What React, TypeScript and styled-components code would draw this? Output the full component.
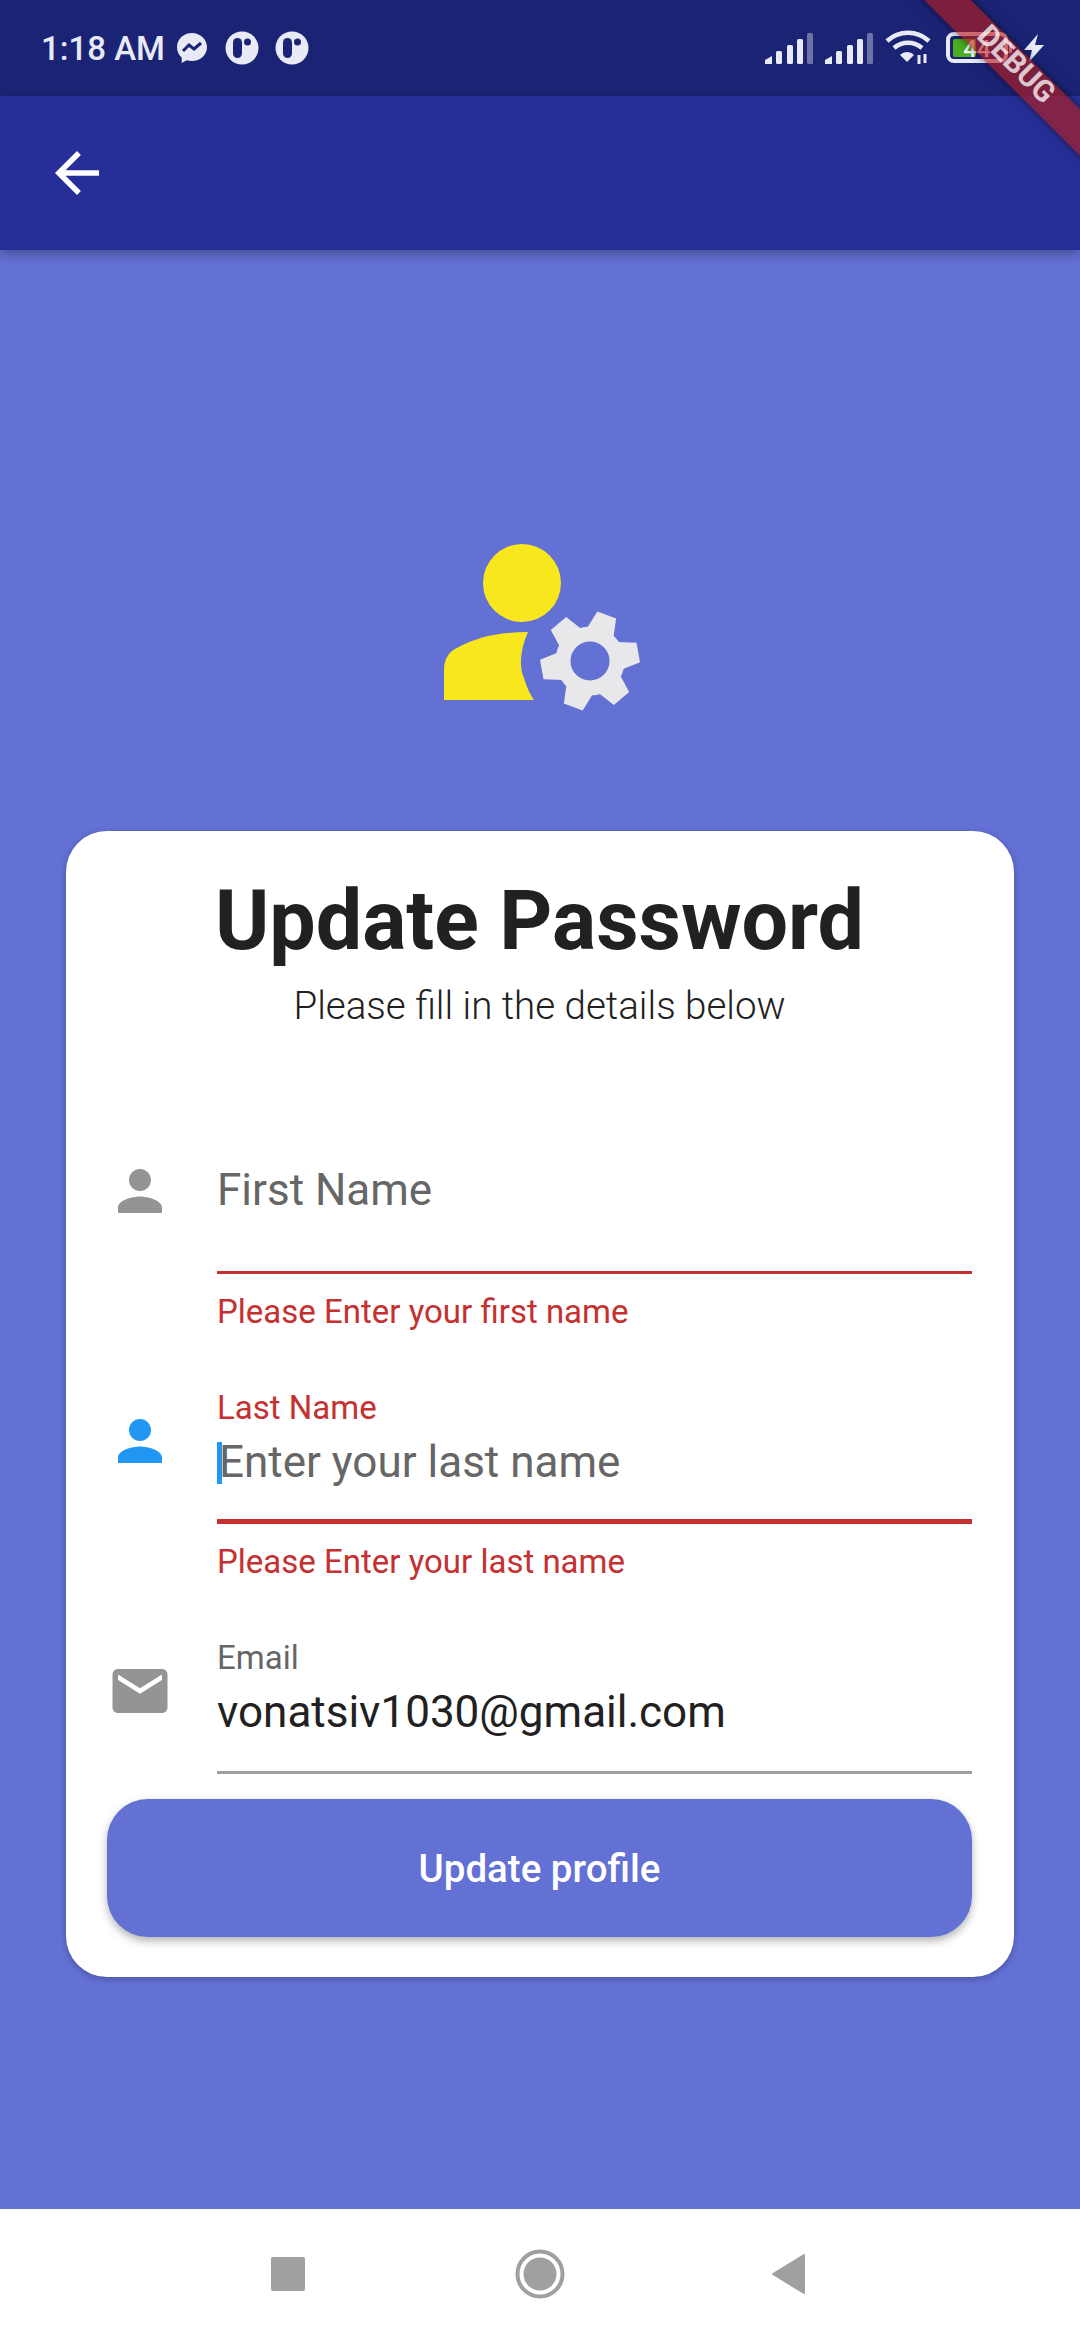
import styled, { createGlobalStyle } from 'styled-components';
import { MdArrowBack, MdEmail, MdPerson } from 'react-icons/md';

const GlobalStyle = createGlobalStyle`
  html, body {
    margin: 0;
    padding: 0;
  }
  * {
    box-sizing: border-box;
  }
`;

const Page = styled.div`
  position: relative;
  display: flex;
  flex-direction: column;
  width: 1080px;
  height: 2340px;
  overflow: hidden;
  background-color: #6370d4;
  font-family: Roboto, "Liberation Sans", sans-serif;
`;

const StatusBar = styled.div`
  display: flex;
  align-items: center;
  justify-content: space-between;
  height: 96px;
  padding: 0 36px 0 41px;
  background-color: #1b2375;
  color: #e8eaf6;
`;

const StatusGroup = styled.div`
  display: flex;
  align-items: center;
`;

const Time = styled.span`
  margin-right: 12px;
  font-size: 33px;
  font-weight: 500;
`;

const AppBar = styled.header`
  z-index: 1;
  display: flex;
  align-items: center;
  height: 154px;
  padding-left: 44px;
  background-color: #262f98;
  box-shadow: 0 4px 10px rgba(0, 0, 0, 0.3);
  color: #fff;
`;

const Main = styled.main`
  flex: 1;
  display: flex;
  flex-direction: column;
  align-items: center;
  padding-top: 290px;
`;

const Hero = styled.svg`
  display: block;
  width: 200px;
  height: 175px;
  margin-bottom: 116px;
`;

const Card = styled.section`
  width: 948px;
  height: 1146px;
  padding: 0 42px 0 41px;
  border-radius: 41px;
  background-color: #fff;
  box-shadow: 0 2px 6px rgba(0, 0, 0, 0.25);
`;

const Title = styled.h1`
  margin: 47px 0 0;
  font-size: 82.5px;
  font-weight: 700;
  line-height: 86px;
  text-align: center;
  color: #212121;
`;

const Subtitle = styled.p`
  margin: 17px 0 103px;
  font-size: 38.5px;
  font-weight: 300;
  line-height: 50px;
  text-align: center;
  color: #212121;
`;

const Field = styled.div<{ $last?: boolean }>`
  display: flex;
  gap: 44px;
  height: ${({ $last }) => ($last ? '165px' : '250px')};
`;

const FieldIcon = styled.div<{ $color: string }>`
  display: flex;
  flex: none;
  width: 66px;
  height: 66px;
  margin-top: 24px;
  color: ${({ $color }) => $color};
`;

const FieldBody = styled.div`
  flex: 1;
`;

const InputBox = styled.div<{ $error?: boolean; $focused?: boolean }>`
  height: 140px;
  border-bottom: ${({ $focused }) => ($focused ? '5px' : '3px')} solid
    ${({ $error }) => ($error ? '#c53030' : '#9e9e9e')};
`;

const FloatingLabel = styled.div<{ $error?: boolean }>`
  font-size: 33px;
  line-height: 48px;
  color: ${({ $error }) => ($error ? '#c53030' : '#666')};
`;

const Hint = styled.div<{ $resting?: boolean }>`
  padding-top: ${({ $resting }) => ($resting ? '26px' : '0')};
  font-size: 44px;
  line-height: 60px;
  color: #666;
`;

const Value = styled.div`
  font-size: 44px;
  line-height: 60px;
  color: #212121;
`;

const Cursor = styled.span`
  display: inline-block;
  width: 5px;
  height: 42px;
  margin-right: -3px;
  vertical-align: -7px;
  background-color: #2196f3;
`;

const ErrorText = styled.div`
  margin-top: 18px;
  font-size: 33px;
  line-height: 40px;
  color: #c53030;
`;

const SubmitButton = styled.button`
  display: block;
  width: 100%;
  height: 138px;
  border: 0;
  border-radius: 41px;
  background-color: #6370d4;
  box-shadow: 0 4px 8px rgba(0, 0, 0, 0.3);
  color: #fff;
  font-family: inherit;
  font-size: 38.5px;
  font-weight: 500;
`;

const NavBar = styled.nav`
  display: flex;
  justify-content: center;
  gap: 202px;
  height: 131px;
  padding-top: 40px;
  background-color: #fff;
`;

const NavIcon = styled.svg`
  display: block;
  width: 50px;
  height: 50px;
  fill: #a0a0a0;
`;

const DebugBanner = styled.div`
  position: absolute;
  z-index: 2;
  top: 50px;
  left: 864px;
  width: 300px;
  height: 33px;
  background-color: rgba(183, 28, 28, 0.63);
  box-shadow: 0 0 9px rgba(0, 0, 0, 0.5);
  color: rgba(255, 255, 255, 0.75);
  font-family: Roboto, sans-serif;
  font-size: 30px;
  font-weight: 700;
  line-height: 26px;
  text-align: center;
  transform: rotate(45deg);
`;

const Messenger = () => (
  <svg width="30" height="30" viewBox="0 0 30 30" style={{ marginRight: 18 }}>
    <path
      fill="#e8eaf6"
      d="M15 0C6.600 0 0 6.200 0 14.200c0 4.200 1.800 7.800 4.700 10.300V30l5-2.800c1.600.5 3.400.8 5.300.8 8.400 0 15-6.200 15-13.800S23.400 0 15 0z"
    />
    <path fill="none" stroke="#1b2375" strokeWidth="3" d="M6 18l6-6 5 4 7-6" />
  </svg>
);

const TrueCircle = () => (
  <svg width="34" height="34" viewBox="0 0 34 34" style={{ marginRight: 16 }}>
    <circle cx="17" cy="17" r="16.500" fill="#e8eaf6" />
    <rect x="8" y="7" width="9" height="20" rx="4.500" fill="#1b2375" />
    <circle cx="22.500" cy="11" r="3.500" fill="#1b2375" />
  </svg>
);

const Signal = () => (
  <svg width="48" height="31" viewBox="0 0 48 31" style={{ marginRight: 12 }}>
    <path d="M0 31v-4l7-4v8z" fill="#e8eaf6" />
    <rect x="11" y="18" width="6" height="13" rx="1.500" fill="#e8eaf6" />
    <rect x="22" y="12" width="6" height="19" rx="1.500" fill="#e8eaf6" />
    <rect x="32" y="6" width="6" height="25" rx="1.500" fill="#e8eaf6" />
    <rect x="42" y="0" width="6" height="31" rx="1.500" fill="#e8eaf6" opacity="0.4" />
  </svg>
);

const Wifi = () => (
  <svg width="46" height="36" viewBox="0 0 46 36" style={{ marginRight: 15 }}>
    <g fill="none" stroke="#e8eaf6" strokeWidth="4.500">
      <path d="M2 11c12-11 30-11 42 0" />
      <path d="M9 18c8-7 20-7 28 0" />
    </g>
    <path d="M15 25c4-4 10-4 14 0l-7 7z" fill="#e8eaf6" />
    <path d="M34 25v9M40 24v9" stroke="#e8eaf6" strokeWidth="3" />
  </svg>
);

const Battery = () => (
  <svg width="78" height="32" viewBox="0 0 78 32">
    <rect x="2" y="2" width="58" height="27" rx="6" fill="none" stroke="#e8eaf6" strokeWidth="4" />
    <rect x="7" y="7" width="23" height="18" rx="2" fill="#4caf1f" />
    <rect x="63" y="10" width="3" height="11" rx="1.500" fill="#e8eaf6" />
    <text x="31" y="25" fontFamily="Roboto, sans-serif" fontSize="24" fontWeight="500" fill="#fff" textAnchor="middle">
      44
    </text>
  </svg>
);

const Bolt = () => (
  <svg width="20" height="28" viewBox="0 0 20 28">
    <path d="M14 0L0 16h8l-3 12L20 11h-9z" fill="#e8eaf6" />
  </svg>
);

const TEETH = [20, 80, 140, 200, 260, 320];

const UserGear = () => (
  <Hero viewBox="0 0 200 175" aria-hidden="true">
    <circle cx="82" cy="43" r="39" fill="#f9e71e" />
    <path
      d="M4 160V130C4 118 10 111 17 108C36 97 60 92 88 92C80 110 79 128 84 138C87 148 90 154 94 160z"
      fill="#f9e71e"
    />
    <g transform="translate(150 121)" fill="#e8e8ea">
      {TEETH.map((angle) => (
        <path key={angle} d="M-14 -30L-10 -49H10L14 -30z" transform={`rotate(${angle})`} />
      ))}
      <circle r="27" fill="none" stroke="#e8e8ea" strokeWidth="15" />
    </g>
  </Hero>
);

const App = () => (
  <Page>
    <GlobalStyle />
    <StatusBar>
      <StatusGroup>
        <Time>1:18 AM</Time>
        <Messenger />
        <TrueCircle />
        <TrueCircle />
      </StatusGroup>
      <StatusGroup>
        <Signal />
        <Signal />
        <Wifi />
        <Battery />
        <Bolt />
      </StatusGroup>
    </StatusBar>
    <AppBar>
      <MdArrowBack size={66} />
    </AppBar>
    <Main>
      <UserGear />
      <Card>
        <Title>Update Password</Title>
        <Subtitle>Please fill in the details below</Subtitle>
        <Field>
          <FieldIcon $color="#949494">
            <MdPerson size={66} />
          </FieldIcon>
          <FieldBody>
            <InputBox $error>
              <Hint $resting>First Name</Hint>
            </InputBox>
            <ErrorText>Please Enter your first name</ErrorText>
          </FieldBody>
        </Field>
        <Field>
          <FieldIcon $color="#2196f3">
            <MdPerson size={66} />
          </FieldIcon>
          <FieldBody>
            <InputBox $error $focused>
              <FloatingLabel $error>Last Name</FloatingLabel>
              <Hint>
                <Cursor />
                Enter your last name
              </Hint>
            </InputBox>
            <ErrorText>Please Enter your last name</ErrorText>
          </FieldBody>
        </Field>
        <Field $last>
          <FieldIcon $color="#949494">
            <MdEmail size={66} />
          </FieldIcon>
          <FieldBody>
            <InputBox>
              <FloatingLabel>Email</FloatingLabel>
              <Value>vonatsiv1030@gmail.com</Value>
            </InputBox>
          </FieldBody>
        </Field>
        <SubmitButton>Update profile</SubmitButton>
      </Card>
    </Main>
    <NavBar>
      <NavIcon viewBox="0 0 50 50">
        <rect x="8" y="8" width="34" height="34" rx="2" />
      </NavIcon>
      <NavIcon viewBox="0 0 50 50">
        <circle cx="25" cy="25" r="22.500" fill="none" stroke="#a0a0a0" strokeWidth="4" />
        <circle cx="25" cy="25" r="16.500" />
      </NavIcon>
      <NavIcon viewBox="0 0 50 50">
        <path d="M6 25L37 6v38z" stroke="#a0a0a0" strokeWidth="2" strokeLinejoin="round" />
      </NavIcon>
    </NavBar>
    <DebugBanner>DEBUG</DebugBanner>
  </Page>
);

export default App;
